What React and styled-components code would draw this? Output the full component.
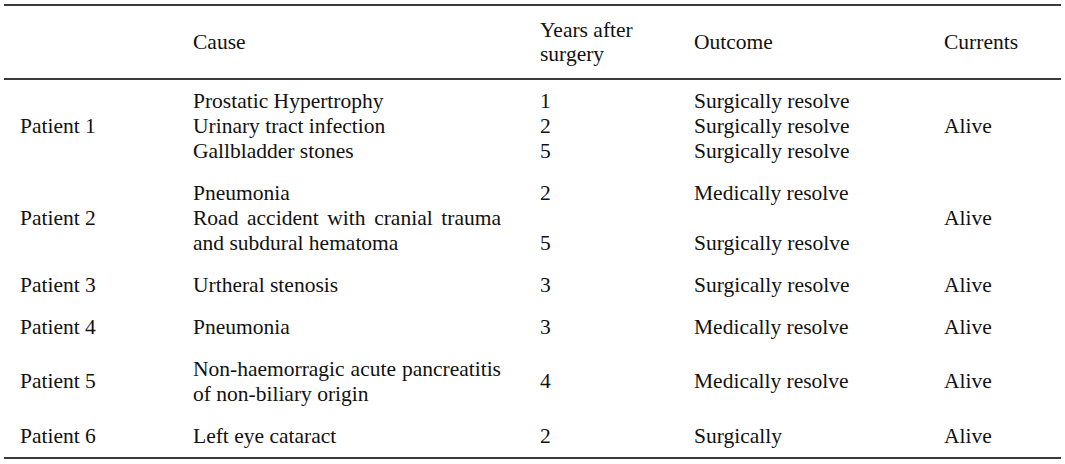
import React from 'react';
import styled, { createGlobalStyle } from 'styled-components';

const GlobalStyle = createGlobalStyle`
  html, body {
    margin: 0;
    padding: 0;
    background: #ffffff;
  }
  body {
    font-family: "Liberation Serif", "Times New Roman", serif;
    color: #111111;
  }
`;

const Page = styled.div`
  padding: 4px 4px 0 4px;
`;

const Table = styled.table`
  width: 1057px;
  table-layout: fixed;
  border-collapse: collapse;
  border-top: 2px solid #3a3a3a;
  border-bottom: 2px solid #3a3a3a;
  font-family: "Liberation Serif", "Times New Roman", serif;
  font-size: 21.5px;
  line-height: 25px;
  color: #111111;
`;

const HeadRow = styled.tr`
  border-bottom: 2px solid #3a3a3a;
`;

const HeadCell = styled.th`
  box-sizing: border-box;
  font-weight: normal;
  text-align: left;
  vertical-align: middle;
  padding: 12px 0 12px ${({ $pad }) => $pad || 0}px;
  width: ${({ $w }) => ($w ? `${$w}px` : 'auto')};
  line-height: 24px;
`;

const Cell = styled.td`
  box-sizing: border-box;
  vertical-align: middle;
  padding: 8.5px 0 8.5px ${({ $pad }) => $pad || 0}px;
`;

const Lines = styled.div`
  display: flex;
  flex-direction: column;
`;

const Line = styled.span`
  display: block;
  min-height: 25px;
`;

const CauseText = styled.div`
  width: 308px;
  text-align: justify;
`;

const rows = [
  {
    patient: 'Patient 1',
    causes: ['Prostatic Hypertrophy', 'Urinary tract infection', 'Gallbladder stones'],
    years: ['1', '2', '5'],
    outcome: ['Surgically resolve', 'Surgically resolve', 'Surgically resolve'],
    current: 'Alive'
  },
  {
    patient: 'Patient 2',
    causes: ['Pneumonia', 'Road accident with cranial trauma and subdural hematoma'],
    years: ['2', '', '5'],
    outcome: ['Medically resolve', '', 'Surgically resolve'],
    current: 'Alive'
  },
  {
    patient: 'Patient 3',
    causes: ['Urtheral stenosis'],
    years: ['3'],
    outcome: ['Surgically resolve'],
    current: 'Alive'
  },
  {
    patient: 'Patient 4',
    causes: ['Pneumonia'],
    years: ['3'],
    outcome: ['Medically resolve'],
    current: 'Alive'
  },
  {
    patient: 'Patient 5',
    causes: ['Non-haemorragic acute pancreatitis of non-biliary origin'],
    years: ['4'],
    outcome: ['Medically resolve'],
    current: 'Alive'
  },
  {
    patient: 'Patient 6',
    causes: ['Left eye cataract'],
    years: ['2'],
    outcome: ['Surgically'],
    current: 'Alive'
  }
];

const App = () => (
  <Page>
    <GlobalStyle />
    <Table>
      <thead>
        <HeadRow>
          <HeadCell $w={189} $pad={16} />
          <HeadCell $w={347}>Cause</HeadCell>
          <HeadCell $w={154}>
            Years after
            <br />
            surgery
          </HeadCell>
          <HeadCell $w={250}>Outcome</HeadCell>
          <HeadCell>Currents</HeadCell>
        </HeadRow>
      </thead>
      <tbody>
        {rows.map(({ patient, causes, years, outcome, current }) => (
          <tr key={patient}>
            <Cell $pad={16}>{patient}</Cell>
            <Cell>
              <CauseText>
                {causes.map(c => (
                  <Line key={c}>{c}</Line>
                ))}
              </CauseText>
            </Cell>
            <Cell>
              <Lines>
                {years.map((y, i) => (
                  <Line key={i}>{y}</Line>
                ))}
              </Lines>
            </Cell>
            <Cell>
              <Lines>
                {outcome.map((o, i) => (
                  <Line key={i}>{o}</Line>
                ))}
              </Lines>
            </Cell>
            <Cell>{current}</Cell>
          </tr>
        ))}
      </tbody>
    </Table>
  </Page>
);

export default App;
